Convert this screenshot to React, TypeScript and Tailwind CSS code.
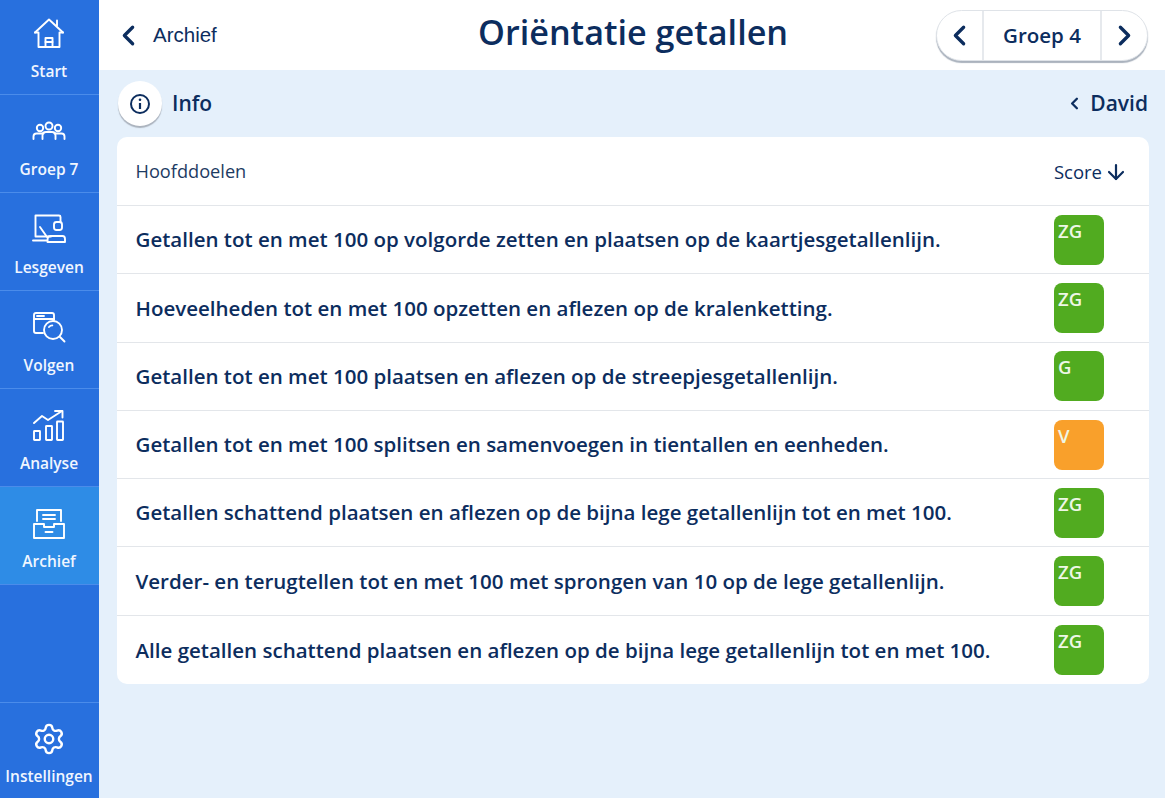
import React from 'react';
import { ChevronLeft, ChevronRight, ArrowDown, Settings } from 'lucide-react';

const GOALS = [
  { text: 'Getallen tot en met 100 op volgorde zetten en plaatsen op de kaartjesgetallenlijn.', score: 'ZG' },
  { text: 'Hoeveelheden tot en met 100 opzetten en aflezen op de kralenketting.', score: 'ZG' },
  { text: 'Getallen tot en met 100 plaatsen en aflezen op de streepjesgetallenlijn.', score: 'G' },
  { text: 'Getallen tot en met 100 splitsen en samenvoegen in tientallen en eenheden.', score: 'V' },
  { text: 'Getallen schattend plaatsen en aflezen op de bijna lege getallenlijn tot en met 100.', score: 'ZG' },
  { text: 'Verder- en terugtellen tot en met 100 met sprongen van 10 op de lege getallenlijn.', score: 'ZG' },
  { text: 'Alle getallen schattend plaatsen en aflezen op de bijna lege getallenlijn tot en met 100.', score: 'ZG' },
];

const iconProps = {
  width: 34,
  height: 34,
  viewBox: '0 0 34 34',
  fill: 'none',
  stroke: 'currentColor',
  strokeWidth: 1.9,
  strokeLinecap: 'round' as const,
  strokeLinejoin: 'round' as const,
};

function HomeIcon() {
  return (
    <svg {...iconProps}>
      <path d="M3 16.500 17 3.500l14 13" />
      <path d="M25 9.500V4.500" />
      <path d="M3 16.500h3.500V31h21V16.500H31" />
      <path d="M13.500 31v-9h7v9" />
      <path d="M13.500 26h7" />
    </svg>
  );
}

function GroupIcon() {
  return (
    <svg {...iconProps}>
      <circle cx="8" cy="13" r="3.200" />
      <circle cx="17" cy="11" r="3.500" />
      <circle cx="26" cy="13" r="3.200" />
      <path d="M1.500 24v-2.500c0-2 1.500-3 3-3h7" />
      <path d="M10.500 24v-3.500c0-2 1.500-3.500 3.500-3.500h6c2 0 3.500 1.500 3.500 3.500V24" />
      <path d="M32.500 24v-2.500c0-2-1.500-3-3-3h-7" />
    </svg>
  );
}

function TeachIcon() {
  return (
    <svg {...iconProps}>
      <path d="M19 23.500H3.500V2.500h23.500a1.500 1.500 0 0 1 1.500 1.500v5" />
      <path d="M1 27.500h14" />
      <path d="M8 14l7 10" />
      <rect x="22" y="9" width="8" height="8" rx="2.500" />
      <path d="M15.500 29c0-3.500 0-6 3-6h12c2 0 2.500 1.500 2.500 3v3H15.500Z" />
    </svg>
  );
}

function FollowIcon() {
  return (
    <svg {...iconProps}>
      <path d="M11 22H4a2 2 0 0 1-2-2V4a2 2 0 0 1 2-2h16a2 2 0 0 1 2 2v5" />
      <path d="M2 8h20" />
      <path d="M5 5h7" />
      <circle cx="21" cy="19" r="9" />
      <path d="M17 16c.8-1 2-1.600 3.300-1.600" />
      <path d="m28 26 4.500 4.500" />
    </svg>
  );
}

function AnalyseIcon() {
  return (
    <svg {...iconProps}>
      <path d="m2 14 8-7 6 4L30 2" />
      <path d="M23 2h7.500v6.500" />
      <rect x="2" y="22" width="6" height="9" rx="0.500" />
      <rect x="14" y="17" width="6" height="14" rx="0.500" />
      <rect x="25" y="12.500" width="6" height="18.500" rx="0.500" />
    </svg>
  );
}

function ArchiveIcon() {
  return (
    <svg {...iconProps}>
      <path d="M5 14V3h24v11" />
      <path d="M11 8h12M11 12h12" />
      <path d="M2 17h10v3h10v-3h10v14H2Z" />
      <path d="M13.500 25h7" />
    </svg>
  );
}

function NavItem({
  icon,
  label,
  active,
  first,
}: {
  icon: React.ReactNode;
  label: string;
  active?: boolean;
  first?: boolean;
}) {
  return (
    <div
      className={`flex flex-col items-center border-b border-[#4b8cea] pr-[1px] ${first ? 'h-[95px] pt-[16px]' : 'h-[98px] pt-[20px]'} ${
        active ? 'bg-[#2e8ce6]' : ''
      }`}
    >
      <div className="h-[34px] w-[34px] text-white">{icon}</div>
      <span className={`whitespace-nowrap text-[15.500px] leading-[24px] font-semibold text-[#f0f6ff] ${first ? 'mt-[9px]' : 'mt-[8px]'}`}>{label}</span>
    </div>
  );
}

export default function App() {
  return (
    <div
      className="flex h-[798px] w-[1165px] overflow-hidden bg-[#e5f0fb] text-[#0c2d5e]"
      style={{ fontFamily: '"Open Sans", "Noto Sans", sans-serif' }}
    >
      {/* Sidebar */}
      <div className="flex w-[99px] shrink-0 flex-col justify-between bg-[#2870de]">
        <div>
          <NavItem first icon={<HomeIcon />} label="Start" />
          <NavItem icon={<GroupIcon />} label="Groep 7" />
          <NavItem icon={<TeachIcon />} label="Lesgeven" />
          <NavItem icon={<FollowIcon />} label="Volgen" />
          <NavItem icon={<AnalyseIcon />} label="Analyse" />
          <NavItem active icon={<ArchiveIcon />} label="Archief" />
        </div>
        <div className="flex h-[96px] flex-col items-center border-t border-[#4b8cea] pt-[19px] pr-[1px]">
          <Settings size={34} strokeWidth={1.7} className="text-white" />
          <span className="mt-[8px] text-[15.500px] leading-[24px] font-semibold text-[#f0f6ff]">Instellingen</span>
        </div>
      </div>

      <div className="flex min-w-0 flex-1 flex-col">
        {/* Top bar */}
        <div className="relative flex h-[70px] items-center justify-between bg-white pr-[17px] pl-[13px]">
          <div className="flex items-center gap-[8px]">
            <ChevronLeft size={33} strokeWidth={2.4} />
            <span className="text-[20.500px] text-[#0c2d5e]" style={{ fontFamily: '"Liberation Sans", sans-serif' }}>
              Archief
            </span>
          </div>
          <h1 className="absolute top-[9px] left-[379px] text-[34.200px] leading-[46px] font-semibold">Oriëntatie getallen</h1>
          <div className="flex h-[51px] w-[212px] items-stretch rounded-full border border-[#dfe3e8] bg-white shadow-[0_2px_1px_#aab2bd]">
            <div className="flex w-[47px] items-center justify-center border-r-2 border-[#e6e9ed]">
              <ChevronLeft size={33} strokeWidth={2.4} />
            </div>
            <div className="flex flex-1 items-center justify-center text-[20.500px] font-semibold">Groep 4</div>
            <div className="flex w-[47px] items-center justify-center border-l-2 border-[#e6e9ed]">
              <ChevronRight size={33} strokeWidth={2.4} />
            </div>
          </div>
        </div>

        {/* Info row */}
        <div className="flex h-[67px] items-center justify-between pr-[17px] pl-[19px]">
          <div className="flex items-center gap-[10px]">
            <div className="flex h-[45px] w-[44px] items-center justify-center rounded-full bg-white shadow-[0_2px_1px_#aab2bd]">
              <svg width="22" height="22" viewBox="0 0 22 22" fill="none" stroke="currentColor" strokeWidth="2">
                <circle cx="11" cy="11" r="9" />
                <path d="M11 10v6" strokeWidth="2.200" />
                <circle cx="11" cy="6.800" r="1.300" fill="currentColor" stroke="none" />
              </svg>
            </div>
            <span className="text-[21px] font-semibold">Info</span>
          </div>
          <div className="flex items-center gap-[6px]">
            <ChevronLeft size={19} strokeWidth={3} />
            <span className="text-[21px] font-semibold">David</span>
          </div>
        </div>

        {/* Goals card */}
        <div className="mr-[16px] ml-[18px] overflow-hidden rounded-[10px] bg-white">
          <div className="flex h-[69px] items-center justify-between border-b border-[#e3e6ea] pt-[2px] pr-[21px] pl-[18.500px]">
            <span className="text-[18.200px] text-[#1d3b63]">Hoofddoelen</span>
            <div className="flex items-center gap-[2px]">
              <span className="text-[18.500px] font-medium">Score</span>
              <ArrowDown size={24} strokeWidth={2.2} />
            </div>
          </div>
          {GOALS.map((goal, i) => (
            <div
              key={i}
              className="flex h-[68.3px] items-center justify-between border-b border-[#e3e6ea] pr-[45px] pl-[18.500px] last:border-b-0"
            >
              <span className="whitespace-nowrap text-[20.520px] font-semibold">{goal.text}</span>
              <div
                className={`flex h-[50px] w-[50px] shrink-0 items-start rounded-[8px] pt-[4px] pl-[4px] text-[18.500px] leading-[24px] font-semibold text-[#eef7e6] ${
                  goal.score === 'V' ? 'bg-[#f9a02b]' : 'bg-[#51ab20]'
                }`}
              >
                {goal.score}
              </div>
            </div>
          ))}
        </div>
      </div>
    </div>
  );
}
